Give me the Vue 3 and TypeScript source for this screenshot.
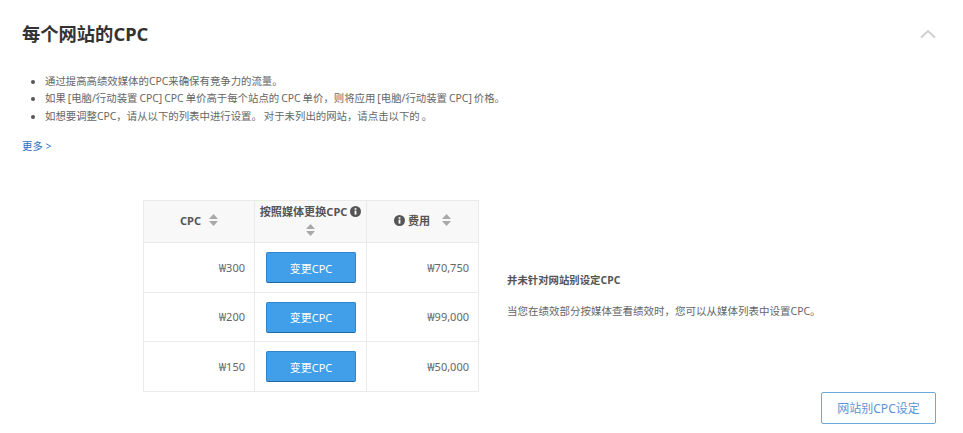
<script setup lang="ts">
const rows = [
  { cpc: '₩300', cost: '₩70,750' },
  { cpc: '₩200', cost: '₩99,000' },
  { cpc: '₩150', cost: '₩50,000' }
]
</script>

<template>
  <div class="panel">
    <div class="head">
      <h2>每个网站的CPC</h2>
      <svg class="chevron" width="16" height="10" viewBox="0 0 16 10">
        <path d="M1 8.5 L8 2 L15 8.5" fill="none" stroke="#cfcfcf" stroke-width="2" />
      </svg>
    </div>
    <ul class="notes">
      <li>通过提高高绩效媒体的CPC来确保有竞争力的流量。</li>
      <li>如果 [电脑/行动装置 CPC] CPC 单价高于每个站点的 CPC 单价，则将应用 [电脑/行动装置 CPC] 价格。</li>
      <li>如想要调整CPC，请从以下的列表中进行设置。 对于未列出的网站，请点击以下的 。</li>
    </ul>
    <a class="more">更多 &gt;</a>

    <div class="body">
      <table>
        <thead>
          <tr>
            <th class="c1">
              CPC
              <svg class="sort" width="9" height="12" viewBox="0 0 9 12"><path d="M4.5 0 L9 5 H0 Z M0 7 H9 L4.5 12 Z" fill="#a9a9a9" /></svg>
            </th>
            <th class="c2">
              <div>按照媒体更换CPC <svg class="info" width="11" height="11" viewBox="0 0 12 12"><circle cx="6" cy="6" r="6" fill="#555" /><rect x="5" y="5" width="2" height="4.4" fill="#fff" /><rect x="5" y="2.4" width="2" height="1.7" fill="#fff" /></svg></div>
              <svg class="sort" width="9" height="12" viewBox="0 0 9 12"><path d="M4.5 0 L9 5 H0 Z M0 7 H9 L4.5 12 Z" fill="#a9a9a9" /></svg>
            </th>
            <th class="c3">
              <svg class="info" width="11" height="11" viewBox="0 0 12 12"><circle cx="6" cy="6" r="6" fill="#555" /><rect x="5" y="5" width="2" height="4.4" fill="#fff" /><rect x="5" y="2.4" width="2" height="1.7" fill="#fff" /></svg>
              费用
              <svg class="sort gap" width="9" height="12" viewBox="0 0 9 12"><path d="M4.5 0 L9 5 H0 Z M0 7 H9 L4.5 12 Z" fill="#a9a9a9" /></svg>
            </th>
          </tr>
        </thead>
        <tbody>
          <tr v-for="row in rows" :key="row.cpc">
            <td class="num">{{ row.cpc }}</td>
            <td class="mid"><button class="change">变更CPC</button></td>
            <td class="num">{{ row.cost }}</td>
          </tr>
        </tbody>
      </table>
      <div class="side">
        <p class="side-title">并未针对网站别设定CPC</p>
        <p class="side-text">当您在绩效部分按媒体查看绩效时，您可以从媒体列表中设置CPC。</p>
      </div>
    </div>

    <div class="foot">
      <button class="site-btn">网站别CPC设定</button>
    </div>
  </div>
</template>

<style scoped>
.panel {
  width: 963px;
  height: 433px;
  box-sizing: border-box;
  padding: 22px 27px 0 22px;
  background: #fff;
  font-family: "Noto Sans", "Noto Sans CJK SC", sans-serif;
  font-size: 10.4px;
  color: #666;
  overflow: hidden;
}

.head {
  display: flex;
  align-items: center;
  justify-content: space-between;
  height: 24px;
}

h2 {
  margin: 0;
  font-size: 18.3px;
  font-weight: 700;
  line-height: 24px;
  color: #333;
}

.notes {
  margin: 26.5px 0 0;
  padding: 0 0 0 23px;
  line-height: 17.5px;
  word-spacing: -0.7px;
}

.notes li::marker {
  color: #555;
}

.more {
  display: block;
  margin-top: 12.5px;
  line-height: 17px;
  color: #2a72c0;
}

.body {
  display: flex;
  align-items: flex-start;
  margin-top: 45px;
  padding-left: 121px;
}

table {
  width: 336px;
  border-collapse: collapse;
  table-layout: fixed;
}

th, td {
  border: 1px solid #eaeaea;
  padding: 0;
}

th {
  height: 41px;
  background: #f8f8f8;
  color: #555;
  font-size: 11.1px;
  font-weight: 700;
  line-height: 16px;
  white-space: nowrap;
}

.c1 {
  width: 110px;
}

.c2 {
  width: 111px;
}

.c2 div {
  margin-top: -2px;
}

.sort {
  margin-left: 5px;
  vertical-align: -1px;
}

.c2 .sort {
  display: block;
  margin: 4px auto 0;
}

.sort.gap {
  margin-left: 9px;
}

.info {
  vertical-align: -1px;
}

td {
  height: 49px;
}

tbody tr:nth-child(2) td {
  height: 48px;
}

.num {
  padding-right: 9px;
  text-align: right;
  font-size: 11px;
}

.mid {
  text-align: center;
}

.change {
  box-sizing: border-box;
  width: 90px;
  height: 31px;
  margin: 1px 0 0 1px;
  padding: 0;
  border: 1px solid #2e85cc;
  border-bottom-color: #1f6aa5;
  border-radius: 2px;
  background: #409fe8;
  color: #fff;
  font: inherit;
  font-size: 11px;
  vertical-align: middle;
}

.side {
  margin-top: 72px;
  padding-left: 28px;
}

.side p {
  margin: 0;
}

.side-title {
  font-weight: 700;
  color: #555;
  line-height: 17px;
}

.side-text {
  margin-top: 14px !important;
  line-height: 17px;
  font-size: 10.5px;
}

.foot {
  display: flex;
  justify-content: flex-end;
}

.site-btn {
  width: 115px;
  height: 32px;
  padding: 0;
  border: 1px solid #69a9dc;
  border-radius: 2px;
  background: #fff;
  color: #5b94d8;
  font: inherit;
  font-size: 12px;
}
</style>

<style>
html, body {
  margin: 0;
  background: #fff;
}
</style>
